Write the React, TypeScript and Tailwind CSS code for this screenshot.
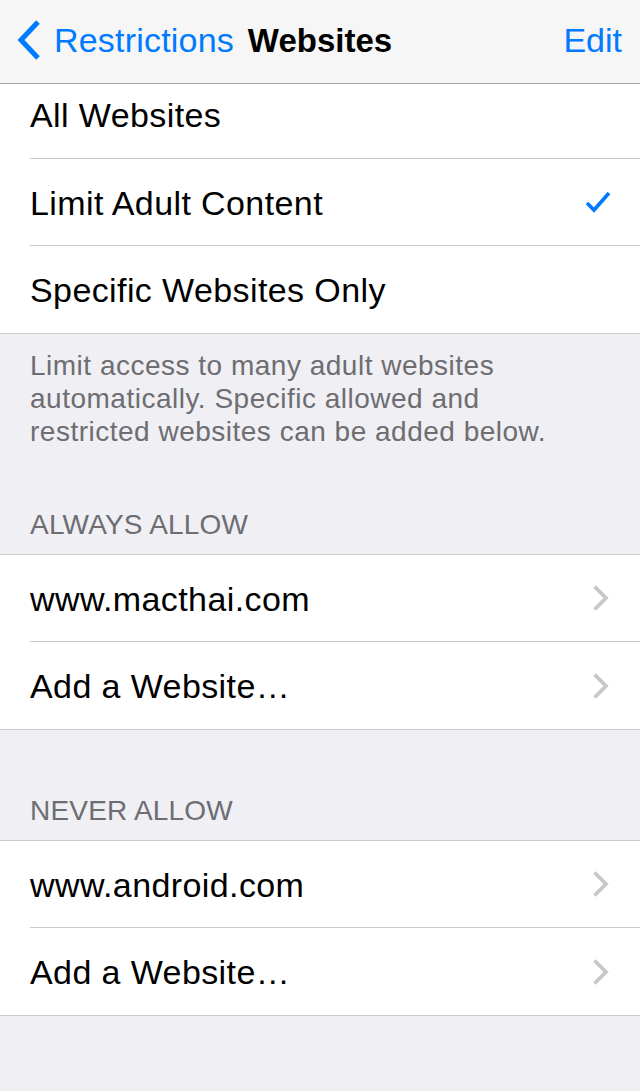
import React from 'react'

const BLUE = '#007aff'

function BackChevron() {
  return (
    <svg width="26" height="40" viewBox="0 0 26 40" className="shrink-0">
      <path d="M22 2 L5 20 L22 38" fill="none" stroke={BLUE} strokeWidth="5" strokeLinecap="butt" strokeLinejoin="miter" />
    </svg>
  )
}

function Check() {
  return (
    <svg width="28" height="24" viewBox="0 0 28 24">
      <path d="M3 13 L10 20 L25 3" fill="none" stroke={BLUE} strokeWidth="3.6" strokeLinecap="butt" strokeLinejoin="miter" />
    </svg>
  )
}

function Disclosure() {
  return (
    <svg width="18" height="28" viewBox="0 0 18 28">
      <path d="M2.5 2.5 L14 14 L2.5 25.5" fill="none" stroke="#c7c7cc" strokeWidth="3.8" strokeLinecap="butt" strokeLinejoin="miter" />
    </svg>
  )
}

function Row({ label, last, accessory, className = 'h-[87px]' }: { label: string; last?: boolean; accessory?: React.ReactNode; className?: string }) {
  return (
    <div className="pl-[30px]">
      <div className={`flex items-center justify-between pr-[30px] ${className} ${last ? '' : 'border-b border-[#c8c7cc]'}`}>
        <span className="text-[34px] tracking-[0.4px] text-black leading-none pt-[1px]">{label}</span>
        {accessory}
      </div>
    </div>
  )
}

function Header({ title, height }: { title: string; height: string }) {
  return (
    <div className={`flex items-end px-[30px] pb-[12px] ${height}`}>
      <span className="text-[28px] leading-[34px] tracking-[0.2px] text-[#6d6d72] uppercase">{title}</span>
    </div>
  )
}

export default function App() {
  return (
    <div className="min-h-[1091px] bg-[#efeff4] font-['Liberation_Sans',Arial,sans-serif]">
      {/* Nav bar */}
      <div className="grid h-[84px] grid-cols-[1fr_auto_1fr] items-center border-b border-[#a7a7aa] bg-[#f6f6f6] pb-[3px]">
        <div className="flex items-center gap-[12px] pl-[16px]">
          <BackChevron />
          <span className="text-[34px] leading-none tracking-[0.2px]" style={{ color: BLUE }}>Restrictions</span>
        </div>
        <span className="text-[33px] font-bold leading-none text-black">Websites</span>
        <div className="flex justify-end pr-[18px]">
          <span className="text-[34px] leading-none" style={{ color: BLUE }}>Edit</span>
        </div>
      </div>

      {/* Filter options */}
      <div className="border-b border-[#c8c7cc] bg-white">
        <Row label="All Websites" className="h-[75px] pb-[14px]" />
        <Row label="Limit Adult Content" accessory={<div className="mr-[-2px]"><Check /></div>} />
        <Row label="Specific Websites Only" last />
      </div>

      <p className="pl-[30px] pr-[90px] pt-[15px] text-[28px] leading-[33px] tracking-[0.5px] text-[#6d6d72]">
        Limit access to many adult websites automatically. Specific allowed and restricted websites can be added below.
      </p>

      <Header title="Always Allow" height="h-[106px]" />
      <div className="border-y border-[#c8c7cc] bg-white">
        <Row label="www.macthai.com" accessory={<Disclosure />} />
        <Row label="Add a Website…" accessory={<Disclosure />} last />
      </div>

      <Header title="Never Allow" height="h-[110px]" />
      <div className="border-y border-[#c8c7cc] bg-white">
        <Row label="www.android.com" accessory={<Disclosure />} />
        <Row label="Add a Website…" accessory={<Disclosure />} last />
      </div>
    </div>
  )
}
